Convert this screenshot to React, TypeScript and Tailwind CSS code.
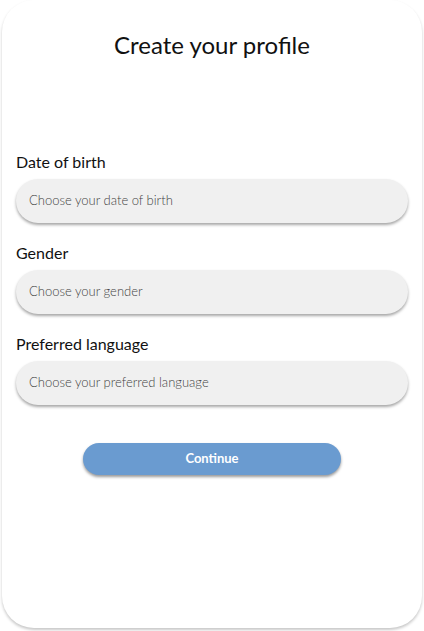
import React from "react";

const font = { fontFamily: "Lato, 'Open Sans', sans-serif" };

function Field({ label, placeholder }: { label: string; placeholder: string }) {
  return (
    <div className="flex flex-col">
      <div className="text-[16px] leading-[20px] text-[#111] font-normal">{label}</div>
      <div className="mt-[7px] h-[44px] rounded-full bg-[#f0f0f0] shadow-[0_2px_3px_rgba(0,0,0,0.35)] flex items-center pl-[13px] text-[13px] text-[#444] font-light">
        {placeholder}
      </div>
    </div>
  );
}

export default function App() {
  return (
    <div className="w-[424px] h-[631px] bg-white overflow-hidden" style={font}>
      <div className="mx-[2px] h-[628px] rounded-[32px] bg-white shadow-[0_2px_3px_rgba(0,0,0,0.22)] flex flex-col pt-[29px] px-[14px]">
        <h1 className="text-center text-[24px] leading-[32px] text-[#111] font-normal">Create your profile</h1>
        <div className="mt-[91px] flex flex-col gap-[20px]">
          <Field label="Date of birth" placeholder="Choose your date of birth" />
          <Field label="Gender" placeholder="Choose your gender" />
          <Field label="Preferred language" placeholder="Choose your preferred language" />
        </div>
        <div className="mt-[38px] flex justify-center">
          <button className="w-[258px] h-[32px] rounded-full bg-[#6a9bd0] text-white text-[13px] font-bold shadow-[0_2px_3px_rgba(0,0,0,0.4)]">
            Continue
          </button>
        </div>
      </div>
    </div>
  );
}
